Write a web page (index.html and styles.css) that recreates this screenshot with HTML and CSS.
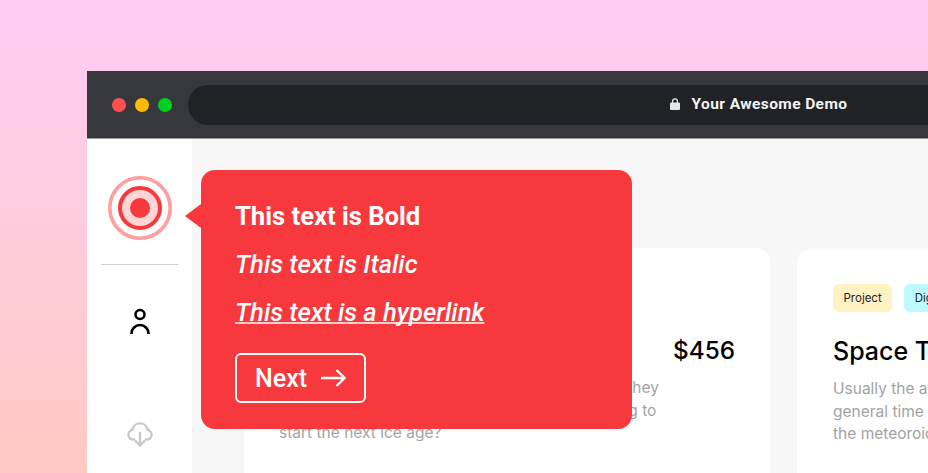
FILE: index.html
```html
<!DOCTYPE html>
<html lang="en">
<head>
  <meta charset="UTF-8">
  <meta name="viewport" content="width=device-width, initial-scale=1.0">
  <title>Your Awesome Demo</title>
  <link rel="stylesheet" href="styles.css">
</head>
<body>
  <div class="window">
    <header class="titlebar">
      <div class="dots">
        <span class="dot dot-red"></span>
        <span class="dot dot-yellow"></span>
        <span class="dot dot-green"></span>
      </div>
      <div class="address">
        <svg class="lock" width="10" height="12" viewBox="0 0 10 12">
          <path d="M2.6 5V3.200a2.400 2.400 0 0 1 4.800 0V5" fill="none" stroke="#e6e6e6" stroke-width="1.300"/>
          <rect x="0" y="4.400" width="10" height="7.600" rx="1" fill="#e6e6e6"/>
        </svg>
        <span>Your Awesome Demo</span>
      </div>
    </header>

    <div class="app">
      <aside class="sidebar">
        <svg class="logo" width="64" height="64" viewBox="0 0 64 64">
          <circle cx="32" cy="32" r="30.200" fill="#fff" stroke="#ff9f9f" stroke-width="3.600"/>
          <circle cx="32" cy="32" r="20" fill="#ffd6d6" stroke="#f7383c" stroke-width="4"/>
          <circle cx="32" cy="32" r="10" fill="#f7383c"/>
        </svg>
        <div class="divider"></div>
        <svg class="icon-user" width="20" height="28" viewBox="0 0 20 28" fill="none" stroke="#000" stroke-width="2.600">
          <circle cx="10" cy="6.500" r="4.500"/>
          <path d="M1.500 26v-.5a8.500 8.500 0 0 1 17 0v.5"/>
        </svg>
        <svg class="icon-cloud" width="26" height="26" viewBox="0 0 26 26" fill="none" stroke="#c9c9c9" stroke-width="2.400" stroke-linecap="round" stroke-linejoin="round">
          <path d="M7 18.500H6a4.900 4.900 0 0 1-.6-9.700a7.700 7.700 0 0 1 15.200 0a4.900 4.900 0 0 1-.6 9.700h-1"/>
          <path d="M13 12v12.500M8.600 20.100l4.400 4.400 4.400-4.400"/>
        </svg>
      </aside>

      <main class="content">
        <div class="tooltip">
          <p class="tip-line tip-bold">This text is Bold</p>
          <p class="tip-line tip-italic">This text is Italic</p>
          <p class="tip-line tip-italic"><a href="#">This text is a hyperlink</a></p>
          <button class="next-btn">
            Next
            <svg width="25" height="18" viewBox="0 0 25 18" fill="none" stroke="#fff" stroke-width="2.400">
              <path d="M0 9h23.500M15.500 1l8 8-8 8"/>
            </svg>
          </button>
        </div>

        <section class="card">
          <div class="tags">
            <span class="tag tag-yellow">Project</span>
            <span class="tag tag-blue">Digital</span>
          </div>
          <div class="card-head">
            <h3>Ice Age Trip</h3>
            <span class="price">$456</span>
          </div>
          <p class="card-text">Usually the asteroids are to blame, but who are they<br>have a general time that the meteorites are going to<br>start the next ice age?</p>
        </section>

        <section class="card card-second">
          <div class="tags">
            <span class="tag tag-yellow">Project</span>
            <span class="tag tag-blue">Digital</span>
          </div>
          <div class="card-head">
            <h3>Space Travel Plans</h3>
          </div>
          <p class="card-text">Usually the asteroids have a<br>general time when they land on<br>the meteoroid belt of the planet.</p>
        </section>
      </main>
    </div>
  </div>
</body>
</html>
```

FILE: styles.css
```css
html, body {
  height: 100%;
}
body {
  margin: 0;
  padding: 71px 0 0 87px;
  box-sizing: border-box;
  overflow: hidden;
  background: linear-gradient(180deg, #ffcdf5 0%, #ffcac2 100%);
  font-family: "Inter", "Noto Sans", sans-serif;
}
.window {
  width: 1500px;
  height: 100%;
  display: flex;
  flex-direction: column;
}
.titlebar {
  height: 67px;
  flex: none;
  display: flex;
  align-items: center;
  gap: 16px;
  padding: 0 0 0 25px;
  background-color: #37383d;
  border-bottom: 1px solid #9a9a9c;
}
.dots {
  display: flex;
  gap: 9px;
}
.dot {
  width: 14px;
  height: 14px;
  border-radius: 50%;
}
.dot-red { background-color: #ff5050; }
.dot-yellow { background-color: #ffbb00; }
.dot-green { background-color: #00d120; }
.address {
  width: 1141px;
  height: 40px;
  padding-bottom: 2px;
  box-sizing: border-box;
  border-radius: 20px;
  background-color: #212226;
  display: flex;
  align-items: center;
  justify-content: center;
  gap: 12px;
  color: #f2f2f2;
  font-family: "Roboto", sans-serif;
  font-size: 15.500px;
  font-weight: 700;
  letter-spacing: 0.400px;
}
.app {
  flex: 1;
  display: flex;
  min-height: 0;
}
.sidebar {
  width: 105px;
  flex: none;
  background: white;
  display: flex;
  flex-direction: column;
  align-items: center;
  padding-top: 37px;
}
.divider {
  width: 77px;
  height: 1px;
  margin-top: 24px;
  background-color: #cfcfcf;
}
.icon-user {
  margin-top: 43px;
}
.icon-cloud {
  margin-top: 85px;
}
.content {
  flex: 1;
  position: relative;
  display: flex;
  align-items: flex-start;
  gap: 27px;
  padding: 109px 0 0 52px;
  background-color: #f7f7f7;
}
.card {
  width: 456px;
  height: 300px;
  flex: none;
  padding: 35px;
  background: white;
  border-radius: 14px;
}
.card-second {
  margin-top: 1px;
  padding-left: 36px;
}
.tags {
  display: flex;
  gap: 12px;
}
.tag {
  height: 28px;
  padding: 0 10.500px;
  display: flex;
  align-items: center;
  border-radius: 6px;
  font-size: 11.500px;
  color: #222;
}
.tag-yellow { background-color: #fff3c4; }
.tag-blue { background-color: #bdf9ff; }
.card-head {
  display: flex;
  justify-content: space-between;
  align-items: center;
  margin-top: 22px;
}
.card-head h3 {
  margin: 0;
  font-size: 25px;
  font-weight: 500;
  line-height: 34px;
  color: #000;
}
.price {
  font-size: 24.300px;
  font-weight: 500;
  color: #000;
}
.card-text {
  margin: 10px 0 0;
  font-size: 15.500px;
  line-height: 22.500px;
  color: #a3a3a3;
}
.tooltip {
  position: absolute;
  left: 9px;
  top: 31px;
  width: 431px;
  height: 259px;
  box-sizing: border-box;
  padding: 30px 34px;
  background-color: #f7383c;
  border-radius: 14px;
  color: white;
  font-family: "Roboto", sans-serif;
}
.tooltip::before {
  content: "";
  position: absolute;
  left: -16px;
  top: 34px;
  border-style: solid;
  border-width: 12.500px 16px 12.500px 0;
  border-color: transparent #f7383c transparent transparent;
}
.tip-line {
  margin: 0 0 16px;
  font-size: 25.600px;
  line-height: 32px;
}
.tip-bold {
  font-weight: 700;
}
.tip-italic {
  font-style: italic;
  font-weight: 500;
}
.tip-italic a {
  color: white;
  text-decoration-color: rgba(255, 255, 255, 0.75);
  text-decoration-thickness: 1.500px;
  text-decoration-skip-ink: none;
  text-underline-offset: 1px;
}
.next-btn {
  display: flex;
  align-items: center;
  gap: 14px;
  height: 50px;
  margin-top: 25px;
  padding: 0 18px 0 18px;
  box-sizing: border-box;
  background: none;
  border: 2px solid white;
  border-radius: 6px;
  color: white;
  font-family: "Roboto", sans-serif;
  font-size: 25px;
  font-weight: 500;
}
```
